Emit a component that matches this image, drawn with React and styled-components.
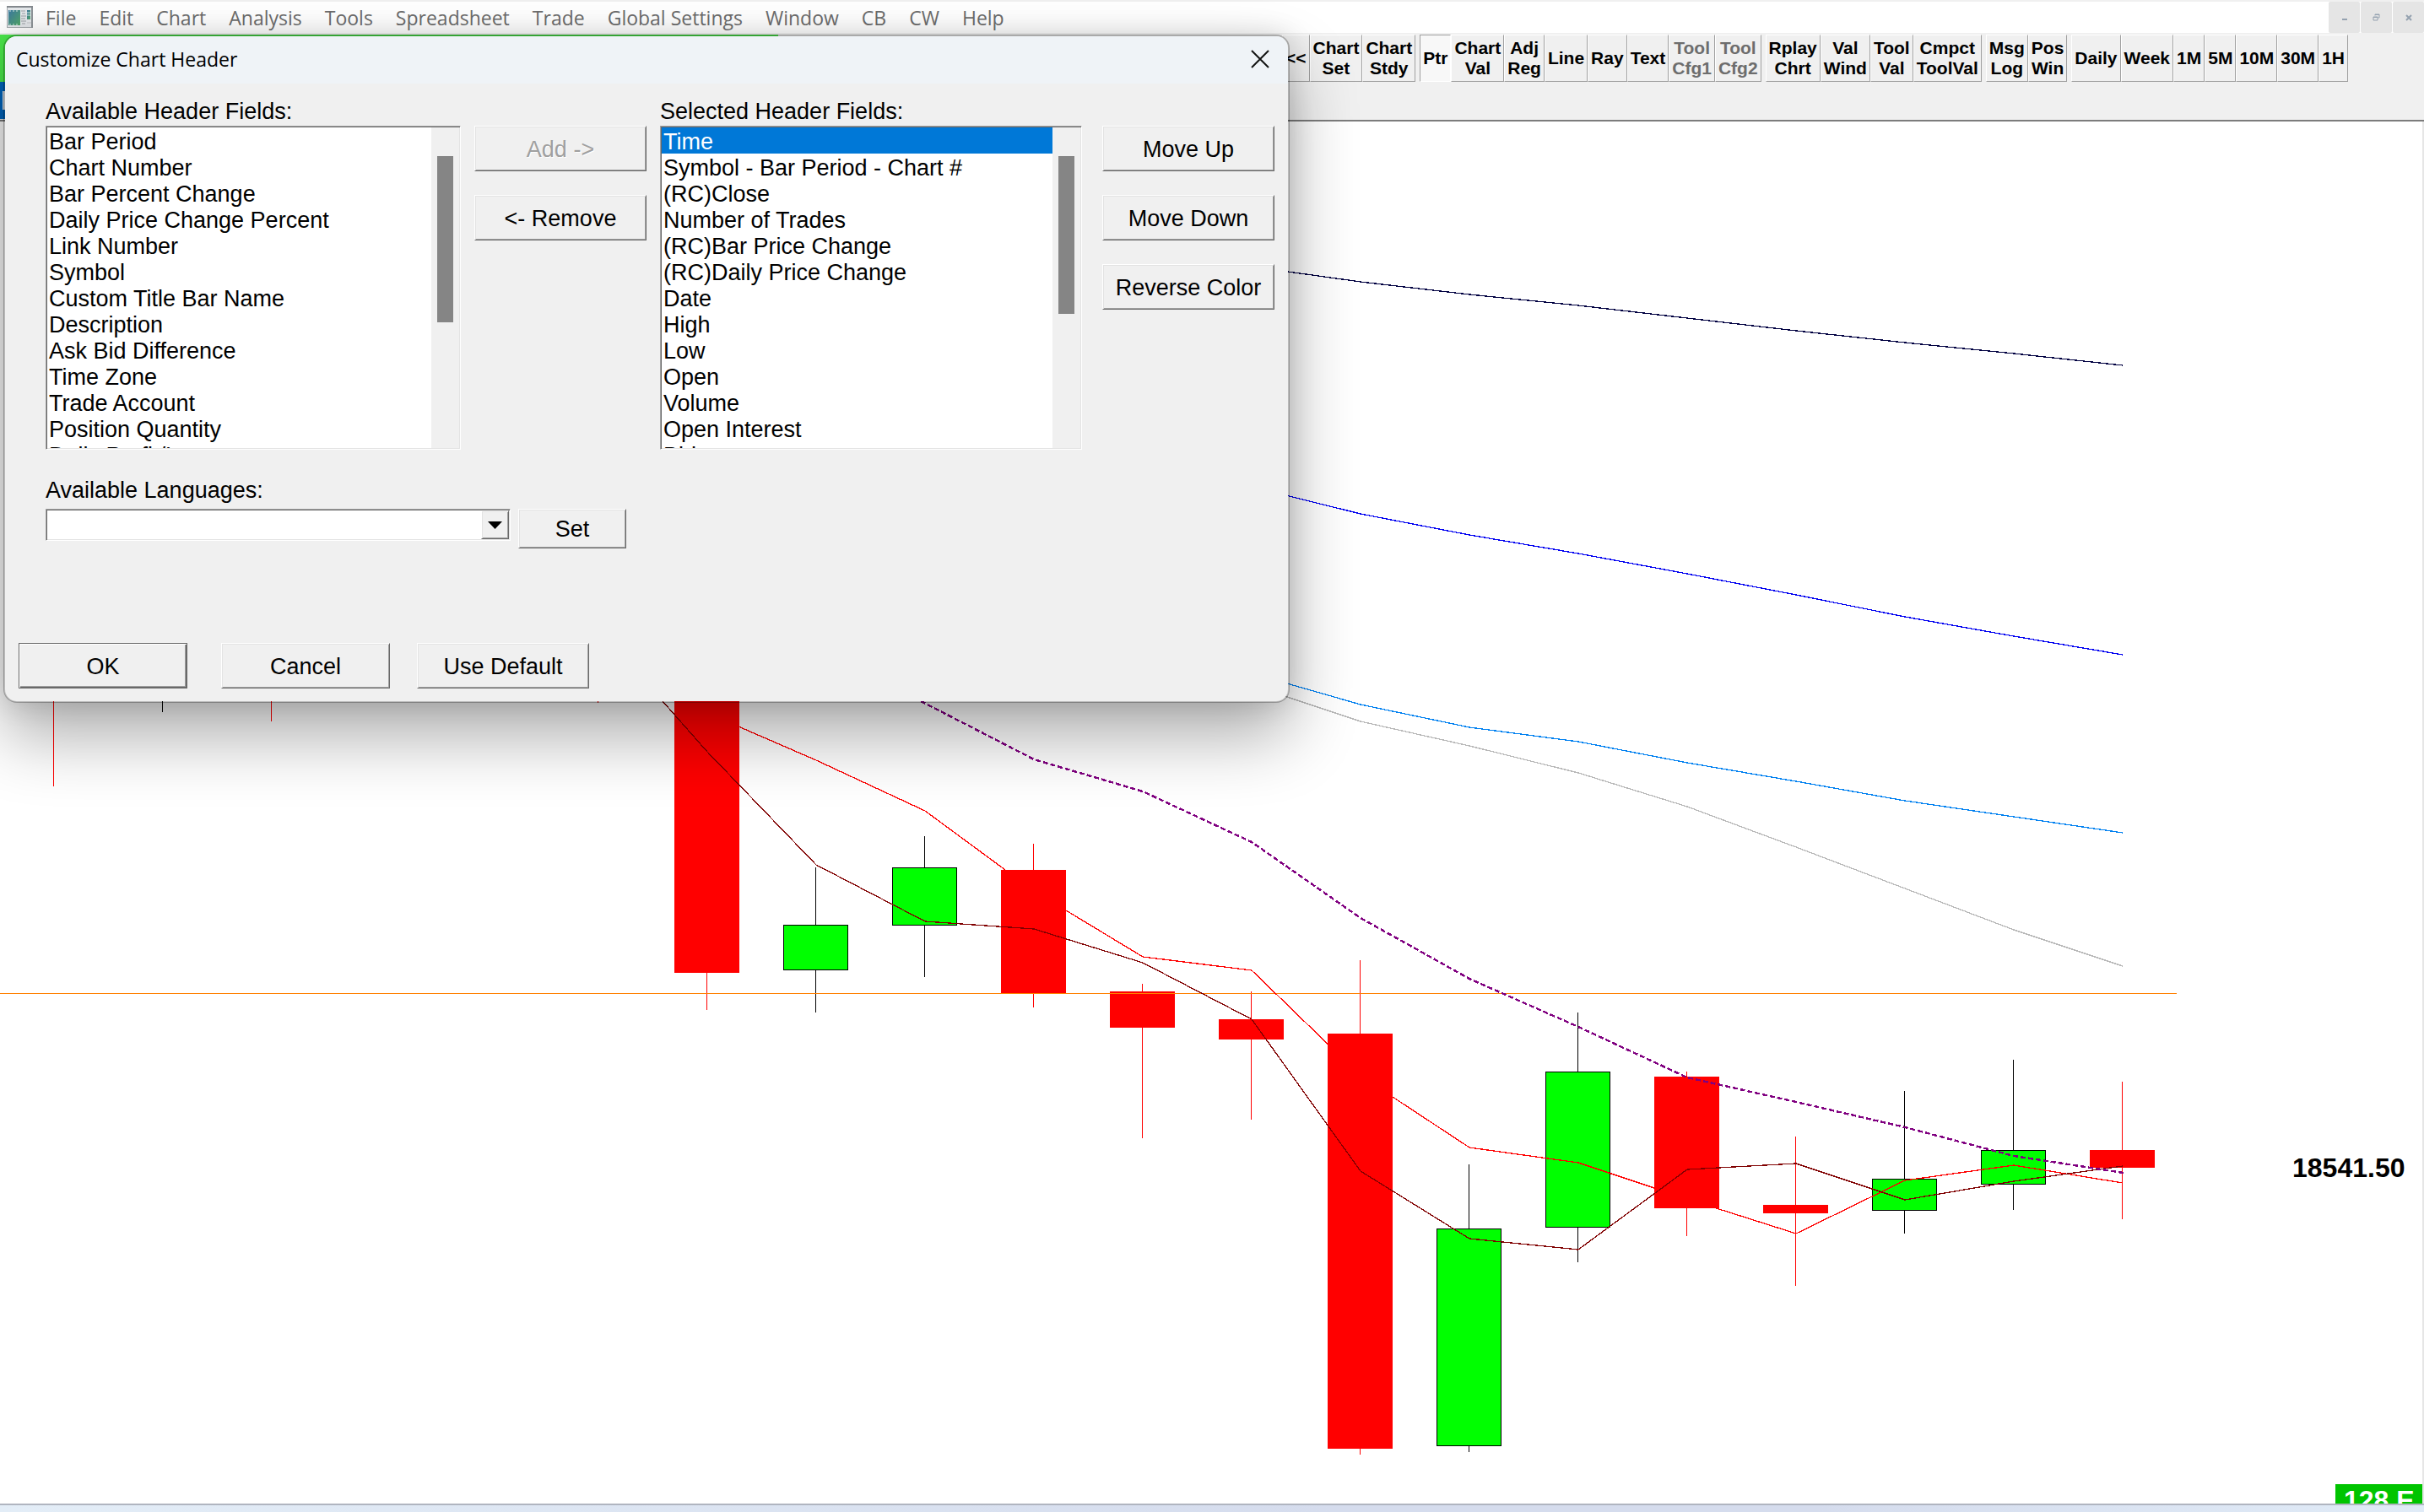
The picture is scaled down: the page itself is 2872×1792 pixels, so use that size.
import React from 'react'
import styled, { createGlobalStyle, css } from 'styled-components'

const GlobalStyle = createGlobalStyle`
  * {
    box-sizing: border-box;
  }

  body {
    margin: 0;
    overflow: hidden;
    background: #fff;
    font-family: 'Liberation Sans', Arial, sans-serif;
  }

  button,
  select {
    margin: 0;
    font: inherit;
    color: inherit;
  }
`

const raised = css`
  border: 1px solid;
  border-color: #fff #696969 #696969 #fff;
  box-shadow: inset 1px 1px #e3e3e3, inset -1px -1px #a0a0a0;
`

const sunken = css`
  border: 1px solid;
  border-color: #a0a0a0 #fff #fff #a0a0a0;
  box-shadow: inset 1px 1px #696969, inset -1px -1px #e3e3e3;
`

const Screen = styled.div`
  position: relative;
  display: flex;
  flex-direction: column;
  height: 100vh;
  background: #fff;
`

const MenuBar = styled.nav`
  display: flex;
  flex: none;
  align-items: center;
  height: 41px;
  padding-left: 8px;
  border-top: 2px solid #f0f0f0;
  border-bottom: 2px solid #f0f0f0;
`

const MenuItems = styled.div`
  display: flex;
  flex: 1;
  gap: 27px;
  padding: 2px 0 0 14px;
`

const MenuItem = styled.button`
  padding: 0;
  border: 0;
  background: none;
  color: #6d6d6d;
  font-family: 'Open Sans', sans-serif;
  font-size: 23px;
  line-height: 35px;
`

const WindowControls = styled.div`
  display: flex;
  gap: 1px;
`

const WindowControl = styled.button`
  display: flex;
  align-items: center;
  justify-content: center;
  width: 37px;
  height: 37px;
  padding: 0;
  border: 0;
  border-radius: 2px;
  background: #e5e5e5;
`

const Toolbar = styled.div`
  display: flex;
  flex: none;
  gap: 5px;
  height: 56px;
  background: #f0f0f0;
`

const ToolGroup = styled.div`
  display: flex;
`

const Connection = styled.div`
  width: 922px;
  background: #4be94b;
`

const HiddenTools = styled.div`
  width: 597px;
  border-bottom: 1px solid #a0a0a0;
`

const ToolButton = styled.button`
  padding: 0 3px;
  border: 1px solid;
  border-color: #fff #a0a0a0 #a0a0a0 #fff;
  background: #f0f0f0;
  color: #000;
  font-size: 21px;
  font-weight: bold;
  line-height: 24px;
  white-space: pre;

  &:disabled {
    color: #6d6d6d;
  }

  &[aria-pressed='true'] {
    border-color: #a0a0a0 #fff #fff #a0a0a0;
    background: #f8f8f8;
  }
`

const SubBar = styled.div`
  flex: none;
  height: 47px;
  background: #f0f0f0;
  border-bottom: 2px solid #7c7c7c;
`

const ChartTab = styled.div`
  width: 60px;
  height: 44px;
  border: solid #0067c0;
  border-width: 11px 3px;
  background: #e4ecf4;
`

const ChartArea = styled.main`
  flex: 1;
  min-height: 0;
  overflow: hidden;
  border-right: 2px solid #e6e6e6;
`

const ChartSvg = styled.svg`
  display: block;
  width: 100%;
`

const Taskbar = styled.footer`
  flex: none;
  height: 10px;
  border-top: 2px solid #b0b5c0;
  background: linear-gradient(90deg, #e3edf7, #d5dced 55%, #d5dced 75%, #e0ebf7);
`

const Dialog = styled.section`
  position: absolute;
  top: 41px;
  left: 4px;
  width: 1524px;
  border: 2px solid rgba(0, 0, 0, 0.26);
  border-radius: 16px;
  background: #f0f0f0;
  background-clip: padding-box;
  box-shadow: 0 40px 80px rgba(0, 0, 0, 0.32), 0 0 32px rgba(0, 0, 0, 0.14);
  color: #000;
  font-size: 27px;
  line-height: 31px;
`

const TitleBar = styled.header`
  display: flex;
  align-items: center;
  justify-content: space-between;
  height: 56px;
  padding: 0 22px 2px 13px;
  border-radius: 14px 14px 0 0;
  background: #eff3f7;
`

const Title = styled.h1`
  margin: 0;
  font-family: 'Open Sans', sans-serif;
  font-size: 23px;
  font-weight: normal;
`

const CloseButton = styled.button`
  display: flex;
  padding: 0;
  border: 0;
  background: none;
`

const Fields = styled.div`
  display: grid;
  grid-template-columns: 492px 204px 500px 212px;
  column-gap: 16px;
  padding: 18px 0 0 48px;
`

const Caption = styled.label`
  display: block;
`

const ListBox = styled.div`
  ${sunken}
  display: flex;
  height: 384px;
  margin-top: 1px;
  padding: 1px;
  background: #fff;
`

const Options = styled.ul`
  flex: 1;
  margin: 0;
  padding: 0;
  overflow: hidden;
  list-style: none;
`

const Option = styled.li`
  height: 31px;
  padding: 2px 0 0 2px;
  white-space: nowrap;

  &[aria-selected='true'] {
    background: #0078d7;
    color: #fff;
  }
`

const ScrollTrack = styled.div`
  width: 33px;
  padding: 34px 7px 0;
  background: #f0f0f0;
`

const ScrollThumb = styled.div`
  height: ${props => props.$length}px;
  background: #858585;
`

const ButtonColumn = styled.div`
  display: flex;
  flex-direction: column;
  align-items: flex-end;
  gap: 28px;
  padding-top: 32px;
`

const widths = { small: 128, medium: 200, large: 204 }

const PushButton = styled.button`
  ${raised}
  width: ${props => widths[props.$size || 'large']}px;
  height: ${props => (props.$size === 'small' ? 47 : 54)}px;
  padding: 2px 0 0;
  background: #f0f0f0;

  &:disabled {
    color: #a0a0a0;
    text-shadow: 1px 1px #fff;
  }
`

const DefaultButton = styled(PushButton)`
  border-color: #696969;
  box-shadow: inset 1px 1px #fff, inset -1px -1px #696969,
    inset -2px -2px #a0a0a0;
`

const Languages = styled.div`
  padding: 33px 0 0 48px;
`

const LanguageRow = styled.div`
  display: flex;
  align-items: flex-start;
  gap: 9px;
  margin-top: 6px;
`

const SelectBox = styled.div`
  position: relative;
`

const Select = styled.select`
  ${sunken}
  display: block;
  width: 551px;
  height: 38px;
  border-radius: 0;
  background: #fff;
  appearance: none;
`

const DropArrow = styled.span`
  ${raised}
  position: absolute;
  top: 2px;
  right: 2px;
  display: flex;
  align-items: center;
  justify-content: center;
  width: 33px;
  height: 34px;
  background: #f0f0f0;
  pointer-events: none;
`

const DialogFooter = styled.div`
  display: flex;
  gap: 40px;
  padding: 112px 16px 15px;
`

const FooterPair = styled.div`
  display: flex;
  gap: 32px;
`

const menus = [
  'File',
  'Edit',
  'Chart',
  'Analysis',
  'Tools',
  'Spreadsheet',
  'Trade',
  'Global Settings',
  'Window',
  'CB',
  'CW',
  'Help',
]

const toolGroups = [
  ['Ptr', 'Chart\nVal', 'Adj\nReg', 'Line', 'Ray', 'Text', 'Tool\nCfg1', 'Tool\nCfg2'],
  ['Rplay\nChrt', 'Val\nWind', 'Tool\nVal', 'Cmpct\nToolVal'],
  ['Msg\nLog', 'Pos\nWin'],
  ['Daily', 'Week', '1M', '5M', '10M', '30M', '1H'],
]

const disabledTools = ['Tool\nCfg1', 'Tool\nCfg2']

const availableFields = [
  'Bar Period',
  'Chart Number',
  'Bar Percent Change',
  'Daily Price Change Percent',
  'Link Number',
  'Symbol',
  'Custom Title Bar Name',
  'Description',
  'Ask Bid Difference',
  'Time Zone',
  'Trade Account',
  'Position Quantity',
  'Daily Profit/Loss',
]

const selectedFields = [
  'Time',
  'Symbol - Bar Period - Chart #',
  '(RC)Close',
  'Number of Trades',
  '(RC)Bar Price Change',
  '(RC)Daily Price Change',
  'Date',
  'High',
  'Low',
  'Open',
  'Volume',
  'Open Interest',
  'Bid',
]

// x of the body's left edge, body top and bottom, wick top and bottom
const candles = [
  { x: 799, top: 700, bottom: 1153, high: 700, low: 1197 },
  { x: 928, top: 1096, bottom: 1150, high: 1028, low: 1200, up: true },
  { x: 1057, top: 1028, bottom: 1097, high: 991, low: 1158, up: true },
  { x: 1186, top: 1031, bottom: 1178, high: 1000, low: 1194 },
  { x: 1315, top: 1175, bottom: 1218, high: 1166, low: 1349 },
  { x: 1444, top: 1208, bottom: 1232, high: 1175, low: 1327 },
  { x: 1573, top: 1225, bottom: 1717, high: 1138, low: 1724 },
  { x: 1702, top: 1456, bottom: 1714, high: 1380, low: 1721, up: true },
  { x: 1831, top: 1270, bottom: 1455, high: 1200, low: 1496, up: true },
  { x: 1960, top: 1276, bottom: 1432, high: 1270, low: 1465 },
  { x: 2089, top: 1428, bottom: 1438, high: 1347, low: 1524 },
  { x: 2218, top: 1397, bottom: 1435, high: 1293, low: 1462, up: true },
  { x: 2347, top: 1363, bottom: 1404, high: 1256, low: 1434, up: true },
  { x: 2476, top: 1363, bottom: 1384, high: 1282, low: 1445 },
]

const coveredWicks = [
  { x: 63, low: 932, color: '#f00' },
  { x: 192, low: 844, color: '#000' },
  { x: 321, low: 855, color: '#f00' },
  { x: 708, low: 833, color: '#f00' },
]

const studies = [
  {
    color: '#000040',
    points:
      '1483,316 1612,334 1741,349 1870,362 1999,377 2128,392 2257,406 2386,419 2515,433',
  },
  {
    color: '#0000f0',
    points:
      '1483,577 1612,609 1741,634 1870,656 1999,680 2128,705 2257,731 2386,754 2515,776',
  },
  {
    color: '#0080f0',
    points:
      '1483,798 1612,835 1741,862 1870,879 1999,904 2128,926 2257,949 2386,968 2515,987',
  },
  {
    color: '#b8b8b8',
    points:
      '1483,812 1612,855 1741,884 1870,916 1999,956 2128,1004 2257,1053 2386,1102 2515,1145',
  },
  {
    color: '#f00',
    points:
      '838,845 967,901 1096,961 1225,1056 1354,1134 1483,1150 1612,1275 1741,1360 1870,1378 1999,1421 2128,1462 2257,1399 2386,1381 2515,1402',
  },
  {
    color: '#800000',
    points:
      '709,745 838,891 967,1025 1096,1092 1225,1101 1354,1141 1483,1208 1612,1388 1741,1468 1870,1481 1999,1386 2128,1379 2257,1422 2386,1400 2515,1382',
  },
]

function Candle({ x, top, bottom, high, low, up }) {
  const ink = up ? '#000' : '#f00'
  return (
    <g>
      <rect x={x + 38} y={high} width="1" height={low - high} fill={ink} />
      <rect x={x} y={top} width="77" height={bottom - top} fill={ink} />
      {up && (
        <rect
          x={x + 1}
          y={top + 1}
          width="75"
          height={bottom - top - 2}
          fill="#0f0"
        />
      )}
    </g>
  )
}

function PriceChart() {
  return (
    <ChartSvg viewBox="0 144 2870 1638" shapeRendering="crispEdges">
      {coveredWicks.map(wick => (
        <rect
          key={wick.x}
          x={wick.x}
          y="600"
          width="1"
          height={wick.low - 600}
          fill={wick.color}
        />
      ))}
      {candles.map(candle => (
        <Candle key={candle.x} {...candle} />
      ))}
      <rect x="0" y="1177" width="2579" height="1" fill="#ff8000" />
      {studies.map(study => (
        <polyline
          key={study.color}
          points={study.points}
          fill="none"
          stroke={study.color}
          strokeWidth="1.3"
        />
      ))}
      <polyline
        points="1091,831 1225,900 1354,938 1483,998 1612,1088 1741,1160 1870,1217 1999,1277 2128,1306 2257,1336 2386,1370 2516,1390"
        fill="none"
        stroke="#800080"
        strokeWidth="2.4"
        strokeDasharray="6 3"
      />
      <rect x="2767" y="1759" width="103" height="23" fill="#00c400" />
      <g fontSize="32" fontWeight="bold">
        <text x="2716" y="1395">
          18541.50
        </text>
        <text x="2777" y="1789" fill="#fff">
          128 E
        </text>
      </g>
    </ChartSvg>
  )
}

function AppIcon() {
  return (
    <svg width="32" height="27" viewBox="0 0 32 27" aria-hidden="true">
      <defs>
        <linearGradient id="iconFill" x1="0" y1="0" x2="1" y2="1">
          <stop offset="0" stopColor="#3d78a0" />
          <stop offset="1" stopColor="#52a868" />
        </linearGradient>
      </defs>
      <rect x="0.5" y="0.5" width="30" height="25" fill="#e4e7ea" stroke="#a3a8ac" />
      <path d="M0 1h31" stroke="#84898e" strokeWidth="2" />
      <path d="M30 2v24" stroke="#8e9498" strokeWidth="2" />
      <rect x="2" y="5" width="14" height="18" fill="url(#iconFill)" />
      <path d="M3 6h12M3 22h12" stroke="#cfe6dc" strokeDasharray="2 2" />
      <path
        d="M17 6h5M18 9h4M17 12h6M17 15h5M17 18h6M18 21h4"
        stroke="#9aa0a5"
      />
      <rect x="24" y="5" width="4" height="11" fill="url(#iconFill)" />
      <path d="M24 8h4M24 11h4" stroke="#d7e8ee" />
      <path d="M24 20h5" stroke="#c2c7ca" />
    </svg>
  )
}

function FieldList({ id, label, items, selected, thumb }) {
  return (
    <div>
      <Caption as="div" id={id}>
        {label}
      </Caption>
      <ListBox>
        <Options role="listbox" aria-labelledby={id}>
          {items.map(item => (
            <Option key={item} role="option" aria-selected={item === selected}>
              {item}
            </Option>
          ))}
        </Options>
        <ScrollTrack>
          <ScrollThumb $length={thumb} />
        </ScrollTrack>
      </ListBox>
    </div>
  )
}

function CustomizeDialog() {
  return (
    <Dialog role="dialog" aria-labelledby="dialog-title">
      <TitleBar>
        <Title id="dialog-title">Customize Chart Header</Title>
        <CloseButton aria-label="Close">
          <svg width="22" height="22" viewBox="0 0 22 22">
            <path d="M1 1l20 20M21 1L1 21" stroke="#111" strokeWidth="2" />
          </svg>
        </CloseButton>
      </TitleBar>

      <Fields>
        <FieldList
          id="available-fields"
          label="Available Header Fields:"
          items={availableFields}
          thumb={197}
        />
        <ButtonColumn>
          <PushButton disabled>Add -&gt;</PushButton>
          <PushButton>&lt;- Remove</PushButton>
        </ButtonColumn>
        <FieldList
          id="selected-fields"
          label="Selected Header Fields:"
          items={selectedFields}
          selected="Time"
          thumb={187}
        />
        <ButtonColumn>
          <PushButton>Move Up</PushButton>
          <PushButton>Move Down</PushButton>
          <PushButton>Reverse Color</PushButton>
        </ButtonColumn>
      </Fields>

      <Languages>
        <Caption htmlFor="languages">Available Languages:</Caption>
        <LanguageRow>
          <SelectBox>
            <Select id="languages">
              <option />
            </Select>
            <DropArrow>
              <svg width="17" height="9" viewBox="0 0 17 9">
                <path d="M0 0h17L8.500 9z" fill="#000" />
              </svg>
            </DropArrow>
          </SelectBox>
          <PushButton $size="small">Set</PushButton>
        </LanguageRow>
      </Languages>

      <DialogFooter>
        <DefaultButton $size="medium">OK</DefaultButton>
        <FooterPair>
          <PushButton $size="medium">Cancel</PushButton>
          <PushButton>Use Default</PushButton>
        </FooterPair>
      </DialogFooter>
    </Dialog>
  )
}

function App() {
  return (
    <Screen>
      <GlobalStyle />
      <MenuBar>
        <AppIcon />
        <MenuItems>
          {menus.map(menu => (
            <MenuItem key={menu}>{menu}</MenuItem>
          ))}
        </MenuItems>
        <WindowControls>
          <WindowControl aria-label="Minimize">
            <svg width="8" height="8" viewBox="0 0 8 8">
              <path d="M1 6h6" stroke="#95a2b0" strokeWidth="2" />
            </svg>
          </WindowControl>
          <WindowControl aria-label="Restore">
            <svg width="9" height="9" viewBox="0 0 9 9" fill="none" stroke="#95a2b0">
              <path d="M3 2.500V1h5v4H6.500M3 1.500h5M1 4.500h5" />
              <path d="M1 4h5v4H1z" />
            </svg>
          </WindowControl>
          <WindowControl aria-label="Close window">
            <svg width="8" height="8" viewBox="0 0 8 8">
              <path d="M1 1l6 6M7 1L1 7" stroke="#95a2b0" strokeWidth="2" />
            </svg>
          </WindowControl>
        </WindowControls>
      </MenuBar>

      <Toolbar>
        <ToolGroup>
          <Connection />
          <HiddenTools />
          <ToolButton>&lt;&lt;</ToolButton>
          <ToolButton>{'Chart\nSet'}</ToolButton>
          <ToolButton>{'Chart\nStdy'}</ToolButton>
        </ToolGroup>
        {toolGroups.map(group => (
          <ToolGroup key={group[0]}>
            {group.map(tool => (
              <ToolButton
                key={tool}
                disabled={disabledTools.includes(tool)}
                aria-pressed={tool === 'Ptr'}
              >
                {tool}
              </ToolButton>
            ))}
          </ToolGroup>
        ))}
      </Toolbar>

      <SubBar>
        <ChartTab />
      </SubBar>

      <ChartArea>
        <PriceChart />
      </ChartArea>
      <Taskbar />

      <CustomizeDialog />
    </Screen>
  )
}

export default App
